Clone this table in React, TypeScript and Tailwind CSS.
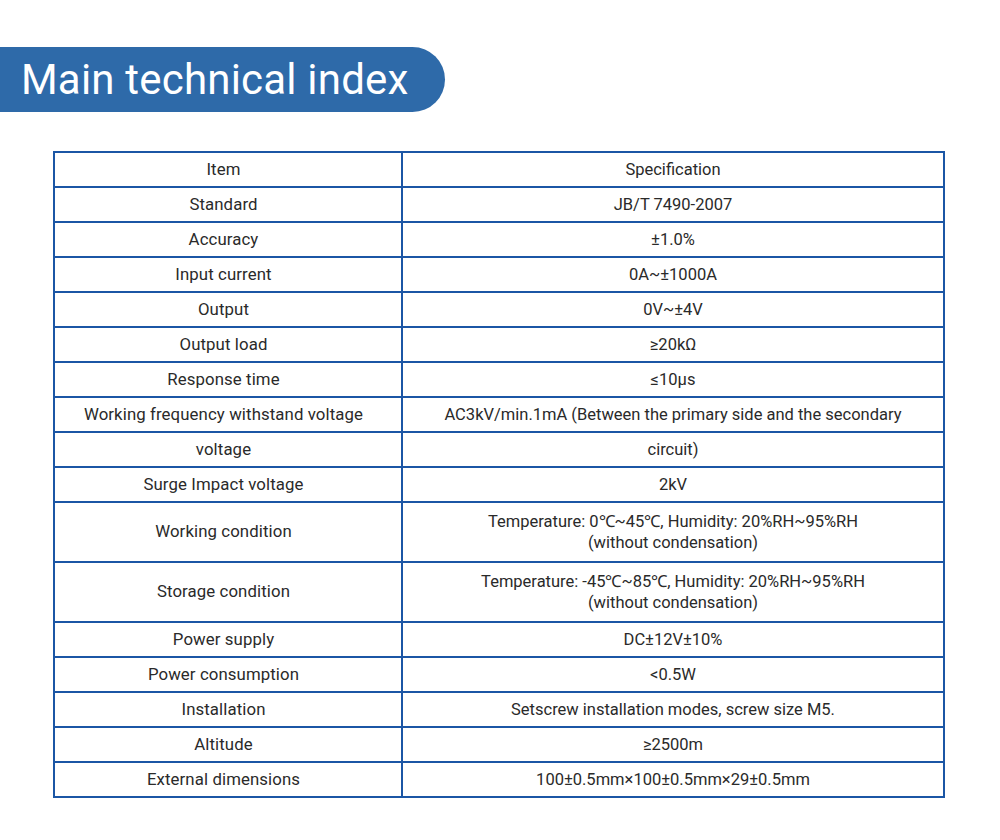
const rows: { item: string; spec: string[]; tall?: boolean }[] = [
  { item: 'Item', spec: ['Specification'] },
  { item: 'Standard', spec: ['JB/T 7490-2007'] },
  { item: 'Accuracy', spec: ['±1.0%'] },
  { item: 'Input current', spec: ['0A~±1000A'] },
  { item: 'Output', spec: ['0V~±4V'] },
  { item: 'Output load', spec: ['≥20kΩ'] },
  { item: 'Response time', spec: ['≤10μs'] },
  { item: 'Working frequency withstand voltage', spec: ['AC3kV/min.1mA (Between the primary side and the secondary'] },
  { item: 'voltage', spec: ['circuit)'] },
  { item: 'Surge Impact voltage', spec: ['2kV'] },
  { item: 'Working condition', spec: ['Temperature: 0℃~45℃, Humidity: 20%RH~95%RH', '(without condensation)'], tall: true },
  { item: 'Storage condition', spec: ['Temperature: -45℃~85℃, Humidity: 20%RH~95%RH', '(without condensation)'], tall: true },
  { item: 'Power supply', spec: ['DC±12V±10%'] },
  { item: 'Power consumption', spec: ['<0.5W'] },
  { item: 'Installation', spec: ['Setscrew installation modes, screw size M5.'] },
  { item: 'Altitude', spec: ['≥2500m'] },
  { item: 'External dimensions', spec: ['100±0.5mm×100±0.5mm×29±0.5mm'] },
]

export default function App() {
  return (
    <div className="w-[1000px] h-[840px] bg-white pt-[47px] font-['Roboto',sans-serif] text-[#2a2a2a]">
      {/* section title */}
      <div className="w-[445px] h-[65px] bg-[#2e6aa9] rounded-r-[33px] flex items-center pl-[21px]">
        <h1 className="text-white text-[42px] leading-none tracking-[0.2px]">Main technical index</h1>
      </div>

      <div className="mt-[39px] ml-[53px] w-[892px] border-2 border-[#1b56a5]">
        {rows.map((r, i) => (
          <div
            key={i}
            className={`flex ${i > 0 ? 'border-t-2 border-[#1b56a5]' : ''} ${r.tall ? 'h-[60px]' : i === 0 ? 'h-[33px]' : 'h-[35px]'}`}
          >
            <div className="w-[348px] pr-[9px] border-r-2 border-[#1b56a5] flex items-center justify-center text-[16.8px] tracking-[0.1px]">
              {r.item}
            </div>
            <div className="flex-1 flex flex-col items-center justify-center text-[16.5px] leading-[21px]">
              {r.spec.map((s, j) => (
                <span key={j}>{s}</span>
              ))}
            </div>
          </div>
        ))}
      </div>
    </div>
  )
}
